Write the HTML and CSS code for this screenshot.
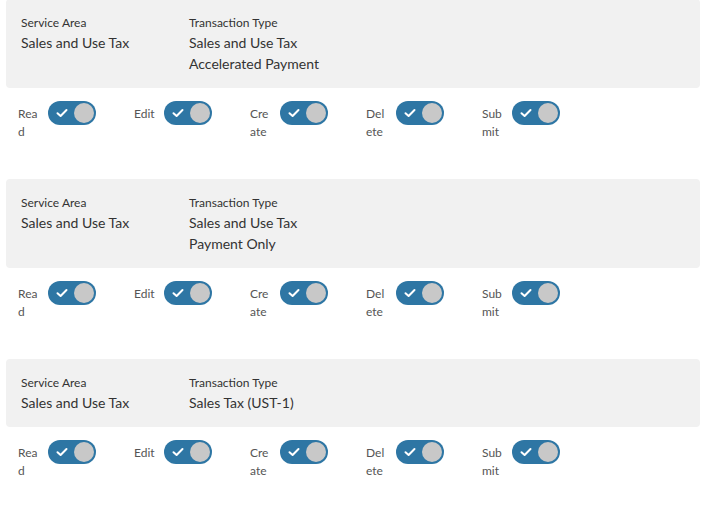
FILE: index.html
```html
<!DOCTYPE html>
<html lang="en">
<head>
  <meta charset="UTF-8">
  <meta name="viewport" content="width=device-width, initial-scale=1.0">
  <title>Permissions</title>
  <link rel="stylesheet" href="styles.css">
</head>
<body>
  <div class="list">
    <div class="entry">
      <div class="summary">
        <div class="field area">
          <div class="field-label">Service Area</div>
          <div class="field-value">Sales and Use Tax</div>
        </div>
        <div class="field">
          <div class="field-label">Transaction Type</div>
          <div class="field-value">Sales and Use Tax<br>Accelerated Payment</div>
        </div>
      </div>
      <div class="perms">
        <div class="perm"><span class="perm-name">Read</span><span class="toggle"><svg viewBox="0 0 12 10"><path d="M1.5 5.2 L4.6 8 L10.5 2"/></svg><span class="knob"></span></span></div>
        <div class="perm"><span class="perm-name">Edit</span><span class="toggle"><svg viewBox="0 0 12 10"><path d="M1.5 5.2 L4.6 8 L10.5 2"/></svg><span class="knob"></span></span></div>
        <div class="perm"><span class="perm-name">Create</span><span class="toggle"><svg viewBox="0 0 12 10"><path d="M1.5 5.2 L4.6 8 L10.5 2"/></svg><span class="knob"></span></span></div>
        <div class="perm"><span class="perm-name">Delete</span><span class="toggle"><svg viewBox="0 0 12 10"><path d="M1.5 5.2 L4.6 8 L10.5 2"/></svg><span class="knob"></span></span></div>
        <div class="perm"><span class="perm-name">Submit</span><span class="toggle"><svg viewBox="0 0 12 10"><path d="M1.5 5.2 L4.6 8 L10.5 2"/></svg><span class="knob"></span></span></div>
      </div>
    </div>

    <div class="entry">
      <div class="summary">
        <div class="field area">
          <div class="field-label">Service Area</div>
          <div class="field-value">Sales and Use Tax</div>
        </div>
        <div class="field">
          <div class="field-label">Transaction Type</div>
          <div class="field-value">Sales and Use Tax<br>Payment Only</div>
        </div>
      </div>
      <div class="perms">
        <div class="perm"><span class="perm-name">Read</span><span class="toggle"><svg viewBox="0 0 12 10"><path d="M1.5 5.2 L4.6 8 L10.5 2"/></svg><span class="knob"></span></span></div>
        <div class="perm"><span class="perm-name">Edit</span><span class="toggle"><svg viewBox="0 0 12 10"><path d="M1.5 5.2 L4.6 8 L10.5 2"/></svg><span class="knob"></span></span></div>
        <div class="perm"><span class="perm-name">Create</span><span class="toggle"><svg viewBox="0 0 12 10"><path d="M1.5 5.2 L4.6 8 L10.5 2"/></svg><span class="knob"></span></span></div>
        <div class="perm"><span class="perm-name">Delete</span><span class="toggle"><svg viewBox="0 0 12 10"><path d="M1.5 5.2 L4.6 8 L10.5 2"/></svg><span class="knob"></span></span></div>
        <div class="perm"><span class="perm-name">Submit</span><span class="toggle"><svg viewBox="0 0 12 10"><path d="M1.5 5.2 L4.6 8 L10.5 2"/></svg><span class="knob"></span></span></div>
      </div>
    </div>

    <div class="entry">
      <div class="summary">
        <div class="field area">
          <div class="field-label">Service Area</div>
          <div class="field-value">Sales and Use Tax</div>
        </div>
        <div class="field">
          <div class="field-label">Transaction Type</div>
          <div class="field-value">Sales Tax (UST-1)</div>
        </div>
      </div>
      <div class="perms">
        <div class="perm"><span class="perm-name">Read</span><span class="toggle"><svg viewBox="0 0 12 10"><path d="M1.5 5.2 L4.6 8 L10.5 2"/></svg><span class="knob"></span></span></div>
        <div class="perm"><span class="perm-name">Edit</span><span class="toggle"><svg viewBox="0 0 12 10"><path d="M1.5 5.2 L4.6 8 L10.5 2"/></svg><span class="knob"></span></span></div>
        <div class="perm"><span class="perm-name">Create</span><span class="toggle"><svg viewBox="0 0 12 10"><path d="M1.5 5.2 L4.6 8 L10.5 2"/></svg><span class="knob"></span></span></div>
        <div class="perm"><span class="perm-name">Delete</span><span class="toggle"><svg viewBox="0 0 12 10"><path d="M1.5 5.2 L4.6 8 L10.5 2"/></svg><span class="knob"></span></span></div>
        <div class="perm"><span class="perm-name">Submit</span><span class="toggle"><svg viewBox="0 0 12 10"><path d="M1.5 5.2 L4.6 8 L10.5 2"/></svg><span class="knob"></span></span></div>
      </div>
    </div>
  </div>
</body>
</html>
```

FILE: styles.css
```css
body {
  margin: 0;
  font-family: 'Lato', 'Liberation Sans', sans-serif;
  color: #333;
  background: #fff;
}
.list {
  margin: -1px 8px 0 6px;
}
.entry {
  margin-bottom: 38px;
}
.summary {
  display: flex;
  background: #f1f1f1;
  border-radius: 4px;
  padding: 15px 15px 14px;
}
.field.area {
  width: 168px;
}
.field-label {
  font-size: 12px;
  line-height: 18px;
  color: #333;
}
.field-value {
  font-size: 14px;
  line-height: 21px;
  color: #333;
}
.perms {
  display: flex;
  margin-top: 13px;
  padding-left: 12px;
}
.perm {
  display: flex;
  align-items: flex-start;
  width: 116px;
}
.perm-name {
  width: 22px;
  margin-right: 8px;
  padding-top: 4px;
  font-size: 12px;
  line-height: 18px;
  color: #555;
  word-break: break-all;
}
.toggle {
  position: relative;
  display: flex;
  align-items: center;
  width: 48px;
  height: 24px;
  border-radius: 12px;
  background: #2e76a4;
}
.toggle svg {
  width: 12px;
  height: 10px;
  margin-left: 8px;
  fill: none;
  stroke: #fff;
  stroke-width: 2;
  stroke-linecap: round;
  stroke-linejoin: round;
}
.knob {
  position: absolute;
  top: 2px;
  right: 2px;
  width: 20px;
  height: 20px;
  border-radius: 50%;
  background: #c8c8c8;
}
```
